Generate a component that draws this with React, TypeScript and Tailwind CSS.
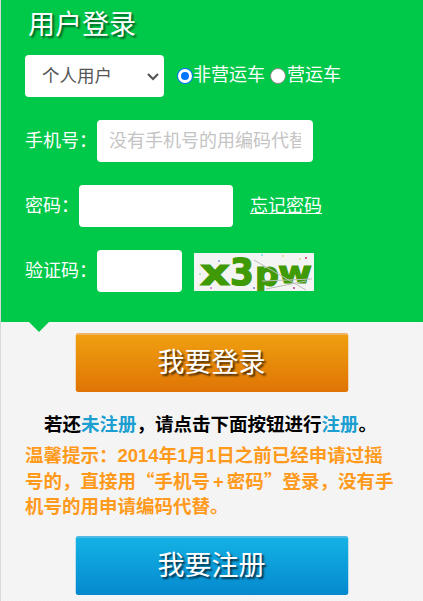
const cjk = "font-['Liberation_Sans','Noto_Sans_CJK_SC',sans-serif]";

function Captcha() {
  return (
    <svg width="120" height="38" viewBox="0 0 120 38" className="block">
      <rect width="120" height="38" fill="#f4f4f4" />
      <g fill="#3f9a06" stroke="#3f9a06" strokeWidth="1.2" fontFamily="'DejaVu Sans', sans-serif" fontWeight="700">
        <text x="6" y="32" fontSize="36" textLength="30" lengthAdjust="spacingAndGlyphs">x</text>
        <text x="36" y="32" fontSize="37" textLength="24" lengthAdjust="spacingAndGlyphs">3</text>
        <text x="61" y="33" fontSize="34" textLength="24" lengthAdjust="spacingAndGlyphs">p</text>
        <text x="84" y="30" fontSize="31" textLength="34" lengthAdjust="spacingAndGlyphs">w</text>
      </g>
      <path d="M60 7 L112 37 M68 28 L118 26 M72 36 L112 28" stroke="#bdbdbd" strokeWidth="1" fill="none" />
      <g>
        <circle cx="25" cy="8" r="1" fill="#7f9be0" />
        <circle cx="6" cy="21" r="1" fill="#a8e6a8" />
        <circle cx="17" cy="35" r="1" fill="#d070d0" />
        <circle cx="68" cy="2" r="1" fill="#70e0f0" />
        <circle cx="89" cy="3" r="1" fill="#e8d080" />
        <circle cx="106" cy="6" r="1" fill="#d8e080" />
        <circle cx="112" cy="5" r="1" fill="#d03070" />
        <circle cx="60" cy="35" r="1" fill="#7080d0" />
        <circle cx="100" cy="35" r="1" fill="#d03090" />
      </g>
    </svg>
  );
}

const quote = "font-['Noto_Sans_CJK_SC',sans-serif]";

export default function App() {
  return (
    <div className={`${cjk} w-[423px] h-[601px] overflow-hidden border-l border-l-[#d8d8d8] bg-[#f4f4f4] bg-[length:4px_4px] bg-[repeating-conic-gradient(#f2f2f2_0_25%,#f6f6f6_0_50%)]`}>
      <form className="relative h-[322px] -ml-px border-l border-l-[#0a9a3c] bg-[#00c94a] text-white">
        <h1 className="pl-[28px] pt-[6px] text-[27px] leading-[38px] font-normal -translate-x-px [text-shadow:2px_2px_2px_rgba(0,0,0,0.55)]">用户登录</h1>

        <div className="mt-[11px] flex h-[42px] items-center pl-[24px]">
          <div className="relative h-[42px] w-[139px] rounded-[4px] bg-white pl-[17px] text-[17.5px] leading-[42px] text-[#555]">
            个人用户
            <svg width="14" height="10" viewBox="0 0 14 10" className="absolute right-[4px] top-[17px]">
              <path d="M2 2 L7 7 L12 2" fill="none" stroke="#555" strokeWidth="2.2" />
            </svg>
          </div>
          <label className="ml-[14px] flex items-center whitespace-nowrap text-[18px] -mt-[1px]">
            <span className="mr-[1px] h-[14px] w-[14px] shrink-0 rounded-full border-[3px] border-white bg-[#0075ff] ring-1 ring-[#0075ff]" />
            非营运车
          </label>
          <label className="ml-[5px] flex items-center whitespace-nowrap text-[18px] -mt-[1px]">
            <span className="mr-[1px] h-[16px] w-[16px] shrink-0 rounded-full border border-[#8a8a8a] bg-white" />
            营运车
          </label>
        </div>

        <div className="mt-[23px] flex h-[42px] items-center pl-[24px]">
          <span className="w-[72px] shrink-0 whitespace-nowrap text-[18px]">手机号：</span>
          <input
            placeholder="没有手机号的用编码代替"
            className="h-[42px] w-[216px] rounded-[4px] bg-white px-[12px] text-[18px] text-[#555] placeholder:text-[#c4c4c4] outline-none"
          />
        </div>

        <div className="mt-[23px] flex h-[42px] items-center pl-[24px]">
          <span className="w-[54px] shrink-0 whitespace-nowrap text-[18px]">密码：</span>
          <input type="password" className="h-[42px] w-[154px] rounded-[4px] bg-white outline-none" />
          <a href="#" className="ml-[17px] text-[18px] underline">忘记密码</a>
        </div>

        <div className="mt-[23px] flex h-[42px] items-center pl-[24px]">
          <span className="w-[72px] shrink-0 whitespace-nowrap text-[18px]">验证码：</span>
          <input className="h-[42px] w-[85px] rounded-[4px] bg-white outline-none" />
          <div className="ml-[12px] mt-[2px]"><Captcha /></div>
        </div>

        <div className="absolute left-[28px] top-[322px] h-0 w-0 border-x-[10px] border-t-[10px] border-x-transparent border-t-[#00c94a]" />
      </form>

      <button className="mx-auto mt-[11px] block h-[59px] w-[273px] translate-x-[-0.5px] rounded-[3px] border-t-2 border-t-[#eeb363] bg-gradient-to-b from-[#ef9f10] to-[#df7405] text-[27px] text-white [text-shadow:2px_2px_2px_rgba(0,0,0,0.7)]">
        我要登录
      </button>

      <p className="mt-[21px] pl-[43px] text-[18.5px] leading-[24px] font-bold whitespace-nowrap text-black">
        若还<span className="text-[#1a9fd0]">未注册</span>，请点击下面按钮进行<span className="text-[#1a9fd0]">注册</span>。
      </p>

      <p className="mt-[6px] w-[396px] pl-[24px] text-[18.5px] leading-[25px] font-bold text-[#ff9a1c]">
        温馨提示：2014年1月1日之前已经申请过摇号的，直接用<span className={quote}>“</span>手机号<span className="px-[3px]">+</span>密码<span className={quote}>”</span>登录，没有手机号的用申请编码代替。
      </p>

      <button className="mx-auto mt-[16.5px] block h-[59px] w-[273px] translate-x-[-0.5px] rounded-[3px] border-t-2 border-t-[#4fb8e4] bg-gradient-to-b from-[#14b1e4] to-[#0689cf] text-[27px] text-white [text-shadow:2px_2px_2px_rgba(0,0,0,0.7)]">
        我要注册
      </button>
    </div>
  );
}
